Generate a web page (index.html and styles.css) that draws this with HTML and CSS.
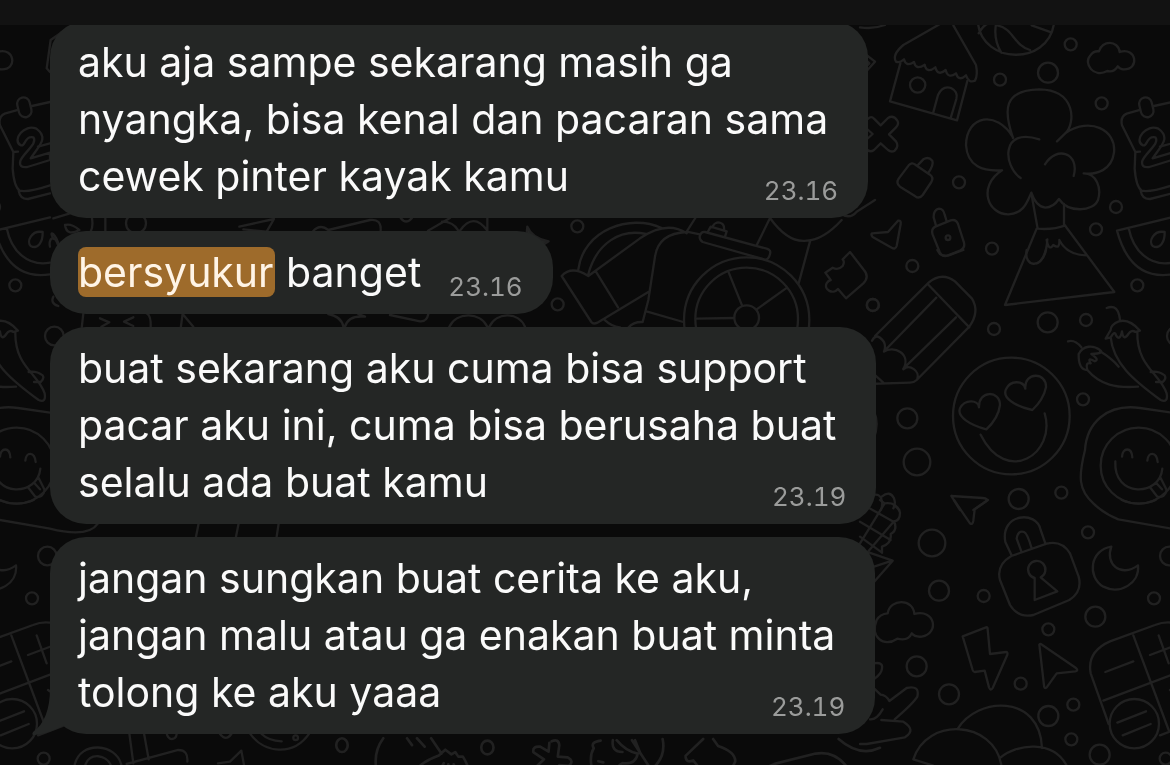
FILE: index.html
```
<!DOCTYPE html>
<html lang="id">
<head>
  <meta charset="UTF-8" />
  <meta name="viewport" content="width=device-width, initial-scale=1.0" />
  <title>Chat</title>
  <link rel="stylesheet" href="styles.css">
</head>
<body>
  <!-- Doodle wallpaper, repeats every 1122px -->
  <svg class="wallpaper" width="1170" height="765" viewBox="0 0 1170 765" aria-hidden="true">
    <defs>
      <g id="tile">
        <!-- house, ball, tree, calendar -->
        <g transform="translate(860 0) scale(.33333)">
          <path d="M0 82Q40 88 75 75M0 150L45 185L6 228M8 170L28 190L6 212"/>
          <path d="M240 72L130 135Q95 165 108 185Q118 190 132 178Q138 202 162 186Q168 212 194 194Q200 222 226 202Q234 230 257 210Q264 238 288 220Q296 246 318 226Q326 250 345 242Q354 225 348 195L280 76"/>
          <path d="M121 190L90 304L291 361L322 243M219 340L234 285Q248 256 273 264Q295 275 289 297L272 354"/>
          <circle cx="173" cy="255" r="23"/>
          <path d="M354 72C370 190 560 200 582 72M356 100Q370 75 385 70M408 72Q400 120 424 158M412 76C460 85 460 135 510 150M515 76L574 97"/>
          <circle cx="632" cy="133" r="18"/><circle cx="564" cy="218" r="30"/><circle cx="420" cy="239" r="18"/><circle cx="725" cy="310" r="18"/>
          <circle cx="297" cy="547" r="18"/><circle cx="396" cy="746" r="18"/><circle cx="708" cy="688" r="18"/><circle cx="768" cy="621" r="18"/>
          <path d="M717 154C725 120 775 120 779 156C830 140 840 210 790 208Q780 208 773 199Q762 218 742 213C700 235 670 190 690 168Q700 152 717 154Z"/>
          <path d="M14 370Q30 342 42 356L62 376L84 354Q100 344 112 362Q118 372 108 382L87 403L108 424Q118 438 104 452Q94 458 84 450L62 430L42 450Q28 460 16 444Q6 432 18 420L38 402L18 384Q10 376 14 370Z"/>
          <path d="M146 496Q155 485 166 494L210 524Q222 533 214 546L188 585Q178 598 166 589L120 560Q107 550 116 536ZM173 496L190 478Q205 468 217 482Q222 495 204 520"/>
          <path d="M218 704Q212 685 228 679L272 661Q288 656 294 672L312 728Q316 744 300 752L262 767Q246 771 239 756ZM228 677L221 652Q220 630 237 626Q250 626 254 644L260 664"/>
          <circle cx="264" cy="713" r="7"/>
          <path d="M36 700L84 696L114 662Q124 660 122 672L110 738Q106 750 95 743L38 711Q32 704 36 700Z"/>
          <path d="M459 414C430 330 430 270 538 268C650 270 645 370 618 398L591 424M459 412C410 330 320 345 318 435C322 500 370 515 426 511M618 398C690 350 770 390 762 458C755 510 710 525 671 520M426 511C350 560 385 645 446 643C490 640 500 610 514 578Q528 620 556 623Q580 622 597 597C625 640 700 635 714 600C725 565 710 520 671 520M538 418C420 380 430 500 482 534M555 493C590 435 660 460 641 528"/>
          <path d="M514 580L533 686M612 612L612 676M533 686Q580 690 616 676M530 686L435 915L763 876L616 678M560 720Q566 755 580 735Q600 750 598 720Q620 765 680 766M562 718C560 760 545 785 530 790"/>
          <path d="M936 306L882 318M840 330L800 341Q780 350 786 376L826 456L824 506Q828 560 845 572Q870 578 936 556M842 572Q846 598 870 597L936 580M826 456L840 455M900 440L936 430"/>
          <rect x="840" y="292" width="38" height="60" rx="19" transform="rotate(-14 859 322)"/>
          <path d="M848 436C820 420 860 370 895 386C935 415 900 440 878 475L936 458V480L868 501Q842 505 847 482C860 455 900 430 886 412Q870 408 861 426Q856 438 848 436Z"/>
          <path d="M936 652L771 692C800 800 860 835 936 823M806 684C820 755 870 800 936 788M914 696C880 690 865 725 878 738C900 750 915 725 914 696ZM936 740C930 715 950 700 960 735"/>
        </g>
        <!-- pencil, smiley, chillies -->
        <g transform="translate(860 250) scale(.33333)">
          <circle cx="157" cy="48" r="18"/><circle cx="39" cy="165" r="18"/><circle cx="402" cy="237" r="18"/><circle cx="563" cy="217" r="30"/><circle cx="678" cy="210" r="18"/><circle cx="832" cy="106" r="18"/>
          <circle cx="142" cy="505" r="30"/><circle cx="171" cy="636" r="40"/><circle cx="669" cy="448" r="18"/><circle cx="476" cy="747" r="30"/><circle cx="604" cy="728" r="18"/><circle cx="949" cy="258" r="28"/>
          <path d="M232 0L240 12Q250 20 266 16L310 0M500 0C490 50 545 60 558 0"/>
          <path d="M45 258L206 98Q245 65 285 94L336 146Q360 185 328 230L170 390Q162 398 150 398L20 402M203 102L328 232M229 143L76 300M288 202L130 356M36 272Q50 245 72 276Q78 290 72 305C100 285 155 310 130 358C150 340 180 365 172 386M30 362L70 398M40 480Q60 520 40 570"/>
          <circle cx="454" cy="498" r="175"/>
          <path d="M379 538C330 525 290 500 300 475C315 445 355 450 357 472C355 420 420 420 420 465Q415 505 379 538ZM517 480C470 470 425 445 438 418C450 390 490 390 496 416C492 365 560 365 558 412Q550 450 517 480ZM362 554C440 710 590 610 554 490"/>
          <path d="M740 174Q775 160 780 210M752 262C760 340 820 390 902 450Q925 460 920 430C900 370 830 350 832 246M737 266L752 262Q765 240 768 256Q780 275 786 244Q790 275 805 252Q815 238 826 246L840 242C790 185 750 225 752 240ZM624 274Q645 268 664 292M656 312C670 285 700 285 720 300Q735 310 694 312Q720 330 704 334Q680 320 692 340Q675 335 682 360Q655 360 656 312ZM682 360C720 405 770 415 834 410M720 304Q755 325 776 350M872 366Q895 362 914 376Q920 386 908 396L888 396"/>
          <path d="M936 488L840 474C740 460 680 520 675 600C655 680 655 720 700 760Q730 790 775 808L936 836Q1050 865 1080 820M936 488L990 492"/>
          <circle cx="836" cy="647" r="114"/>
          <path d="M766 634C760 745 900 740 907 656M786 620C788 592 815 590 817 622M862 632C864 604 890 604 893 636M870 712L892 740Q915 745 920 720L902 684M888 698L906 718"/>
          <path d="M274 738L368 744Q386 746 378 754L340 780M274 738L300 780M40 735Q60 730 65 750Q70 765 62 780M65 740Q90 720 102 745Q108 760 100 775M102 765L118 780"/>
        </g>
        <!-- corn, padlock, moon, calculator -->
        <g transform="translate(860 500) scale(.33333)">
          <path d="M282 0L330 70Q338 76 340 62L344 28L384 0"/>
          <path d="M60 0L74 10Q110 5 120 38Q120 62 102 64Q114 90 92 102Q96 130 66 140V158M74 10L0 130M102 64L20 160M0 65L92 120M20 20L102 66M0 110L66 158M28 158L98 182L42 246M42 200L90 184"/>
          <circle cx="216" cy="129" r="40"/><circle cx="237" cy="272" r="30"/><circle cx="371" cy="288" r="18"/><circle cx="684" cy="97" r="18"/><circle cx="565" cy="388" r="18"/><circle cx="706" cy="350" r="30"/><circle cx="882" cy="295" r="18"/><circle cx="928" cy="168" r="28"/>
          <circle cx="170" cy="499" r="30"/><circle cx="267" cy="583" r="30"/><circle cx="482" cy="551" r="18"/><circle cx="565" cy="648" r="30"/><circle cx="640" cy="614" r="18"/><circle cx="634" cy="718" r="18"/><circle cx="719" cy="764" r="30"/><circle cx="917" cy="776" r="18"/>
          <path d="M454 164L436 126C420 40 530 30 542 90L556 130M484 154L470 116Q474 90 492 96Q502 100 514 142M454 168L560 131Q605 120 630 160L656 230Q668 275 628 300L520 345Q475 355 450 315L420 240Q408 195 454 168Z"/>
          <path d="M524 234A26 26 0 1 1 542 232L592 274L524 300Z"/>
          <path d="M754 140C690 150 680 230 730 260C780 285 840 250 834 196C780 235 735 190 754 140Z"/>
          <path d="M83 340C90 295 160 295 163 342C225 325 240 400 185 410Q165 412 155 400Q145 424 112 416C70 445 30 410 50 360Q60 342 83 340Z"/>
          <path d="M308 409L378 382Q383 380 383 388L390 462L438 456Q444 456 442 464L398 564Q392 574 387 562L374 512L344 516Q340 516 338 510ZM538 434Q540 428 548 436L648 504Q656 512 646 514L590 520L560 562Q552 568 552 556Z"/>
          <path d="M40 490Q70 485 66 505Q65 520 44 536M42 565L62 584Q78 585 88 603L140 564Q180 555 172 590Q160 610 104 658M64 660L130 665Q170 690 135 712L20 732H0M30 658Q50 660 68 628"/>
          <path d="M292 688C350 590 540 580 546 744M160 778C200 650 400 660 424 795M160 778L220 797M420 774C470 730 580 720 620 797"/>
          <path d="M936 368Q910 365 885 375L750 424Q680 455 692 520L746 672M730 602L936 524M820 406L926 690M900 706L990 672M736 516L820 484M870 465L950 435M896 406L926 490M930 570L950 584"/>
          <circle cx="823" cy="671" r="74"/><path d="M772 668L858 634M788 706L872 672"/>
          <path d="M785 0Q836 22 887 0"/>
        </g>
      </g>
    </defs>
    <use href="#tile"/>
    <use href="#tile" x="-1122"/>
    <!-- helmet, wheel, puzzle piece -->
    <g transform="translate(540 200) scale(.33333)">
      <circle cx="112" cy="79" r="18"/><circle cx="53" cy="313" r="18"/><circle cx="998" cy="315" r="18"/>
      <path d="M65 228L154 366Q160 374 172 368L325 276M65 228Q95 195 145 228L300 115Q380 60 440 100M115 208C130 90 270 40 365 84M145 222C170 130 240 85 318 102M166 212L234 322M440 96Q355 100 345 170L325 300L308 366Q280 365 266 382M192 358Q215 380 240 382M322 335L430 366M440 95L466 54M440 95L480 103"/>
      <path d="M495 96L680 146Q694 150 690 162Q686 182 672 178L488 126Q476 118 480 106Q484 94 495 96ZM504 95L512 80L560 94L555 110M518 80C525 60 555 65 552 90"/>
      <circle cx="620" cy="360" r="188"/><circle cx="620" cy="357" r="154"/><circle cx="620" cy="353" r="37"/>
      <path d="M566 217L606 316M738 265L650 328M470 356L582 354M650 136L690 54Q745 130 800 122Q850 120 905 60M810 124L776 250M900 40Q930 60 950 35L1005 0"/>
      <path d="M930 156L970 208Q990 230 970 250L918 295L894 267C880 285 850 270 860 250Q864 242 872 240L856 218L878 203Q895 212 908 198Q915 185 908 178Z"/>
    </g>
    <!-- strips that show between the bubbles -->
    <g transform="scale(.33333)">
      <path d="M150 216L140 205L152 120L195 90M160 655L210 640M160 716C145 690 165 695 178 740M195 675Q215 670 238 690Q200 710 195 675ZM276 655Q280 680 272 695M316 655V695M718 680L822 657L800 695L730 688"/>
      <circle cx="408" cy="670" r="30"/>
      <path d="M250 940L245 985M440 940Q454 945 452 985M300 955L328 967L304 980M400 952L372 965L400 978M548 940L542 985M548 942L580 980M160 890Q150 910 175 918"/>
      <path d="M596 1570L588 1610M716 1570L708 1610M836 1570L830 1610"/>
      <path d="M388 2200L400 2290M432 2200L446 2278M380 2292L535 2250Q565 2250 562 2285M224 2295C240 2220 350 2230 364 2295M256 2295C270 2255 320 2265 332 2295M500 2200C505 2225 528 2220 530 2202M660 2202Q678 2225 694 2202M750 2200C790 2260 880 2270 928 2200M785 2202Q805 2222 845 2224M654 2290L690 2285L724 2252L732 2295"/>
      <circle cx="887" cy="2213" r="7"/>
    </g>
    <g transform="translate(280 200) scale(.33333)">
      <path d="M98 95Q120 70 145 90L270 60Q305 55 302 95M362 54Q378 75 396 54M444 92L510 54M486 65Q520 65 535 92M540 92Q580 35 622 92M622 54V95"/>
      <path class="spark" d="M742 80Q756 115 806 124L780 140L740 100Z"/>
      <path d="M145 342Q185 350 190 380M195 380Q205 345 255 350L235 342M330 345L420 364Q440 366 445 342M508 380C530 335 600 335 622 380M628 380C650 335 715 335 735 380"/>
    </g>
    <g transform="translate(280 700) scale(.3826)">
      <ellipse cx="162" cy="118" rx="15" ry="18"/><ellipse cx="542" cy="124" rx="16" ry="18"/>
      <path d="M270 100Q240 140 255 195M332 100L345 118M358 100L378 122M395 100L422 140M350 195Q360 165 415 145L432 130L448 142L458 136L466 148L478 148Q492 170 496 195M428 165L418 184M440 168V188M454 168L462 188"/>
      <path d="M710 108Q728 100 730 118L726 148L752 150Q770 160 755 172L730 170L738 195M704 112L702 135L680 122Q660 120 662 136L690 155L668 176Q665 192 682 188L704 174L710 195M575 195L592 187"/>
      <path d="M838 106Q810 110 820 126Q805 150 820 195M870 105Q865 135 895 136M880 105Q905 135 935 140Q930 170 895 165Q875 175 884 195M920 105L970 182Q1010 150 1000 102M832 160L845 163M928 105L942 140"/>
      <path d="M1106 102L1060 146Q1060 166 1080 158L1110 195M1132 102L1145 120Q1190 135 1190 160Q1180 185 1162 195M1254 195Q1265 175 1300 165L1400 140Q1460 130 1494 195M1460 102Q1515 150 1568 125"/>
    </g>
  </svg>

  <header class="topbar"></header>

  <main class="chat">
    <div class="bubble">
      <p class="text">aku aja sampe sekarang masih ga<br>nyangka, bisa kenal dan pacaran sama<br>cewek pinter kayak kamu</p>
      <time class="time">23.16</time>
    </div>
    <div class="bubble short">
      <p class="text"><mark>bersyukur</mark> banget</p>
      <time class="time">23.16</time>
    </div>
    <div class="bubble">
      <p class="text">buat sekarang aku cuma bisa support<br>pacar aku ini, cuma bisa berusaha buat<br>selalu ada buat kamu</p>
      <time class="time">23.19</time>
    </div>
    <div class="bubble">
      <svg class="tail" width="32" height="48" viewBox="0 0 32 48" aria-hidden="true"><path d="M18 0Q18 32 1 44Q-1 48 3 47Q18 45 31 38V0Z"/></svg>
      <p class="text">jangan sungkan buat cerita ke aku,<br>jangan malu atau ga enakan buat minta<br>tolong ke aku yaaa</p>
      <time class="time">23.19</time>
    </div>
  </main>
</body>
</html>
```
FILE: styles.css
```
* { margin: 0; padding: 0; box-sizing: border-box; }
body {
  font-family: Inter, "Liberation Sans", sans-serif;
  background: #0a0a0a;
  color: #fafafa;
  overflow-x: hidden;
}

/* Doodle background */
.wallpaper {
  position: fixed;
  top: 0; left: 0;
  z-index: -1;
  fill: none;
  stroke: #212121;
  stroke-width: 7;
  stroke-linecap: round;
  stroke-linejoin: round;
}
.spark { fill: #242625; }

.topbar {
  position: sticky;
  top: 0;
  z-index: 1;
  height: 25px;
  background: #121212;
}

/* Messages */
.chat {
  display: flex;
  flex-direction: column;
  align-items: flex-start;
  gap: 13px;
  margin-top: -4px;
  padding: 0 50px 31px;
}
.bubble {
  position: relative;
  display: grid;
  padding: 13px 30px 13px 28px;
  background: #242625;
  border-radius: 36px;
}
.text {
  grid-area: 1 / 1;
  padding-right: 10px;
  font-size: 41px;
  line-height: 57px;
  white-space: nowrap;
}
.time {
  grid-area: 1 / 1;
  align-self: end;
  justify-self: end;
  font-size: 26px;
  font-variant-numeric: tabular-nums;
  line-height: 28px;
  color: #9b9c9b;
}
.short {
  display: flex;
  gap: 17px;
}
mark {
  padding: 0 1px 0 0;
  border-radius: 8px;
  background: #9e6b2b;
  color: #fff4e6;
}
.tail {
  position: absolute;
  left: -18px;
  bottom: -2px;
  fill: #242625;
}
```
